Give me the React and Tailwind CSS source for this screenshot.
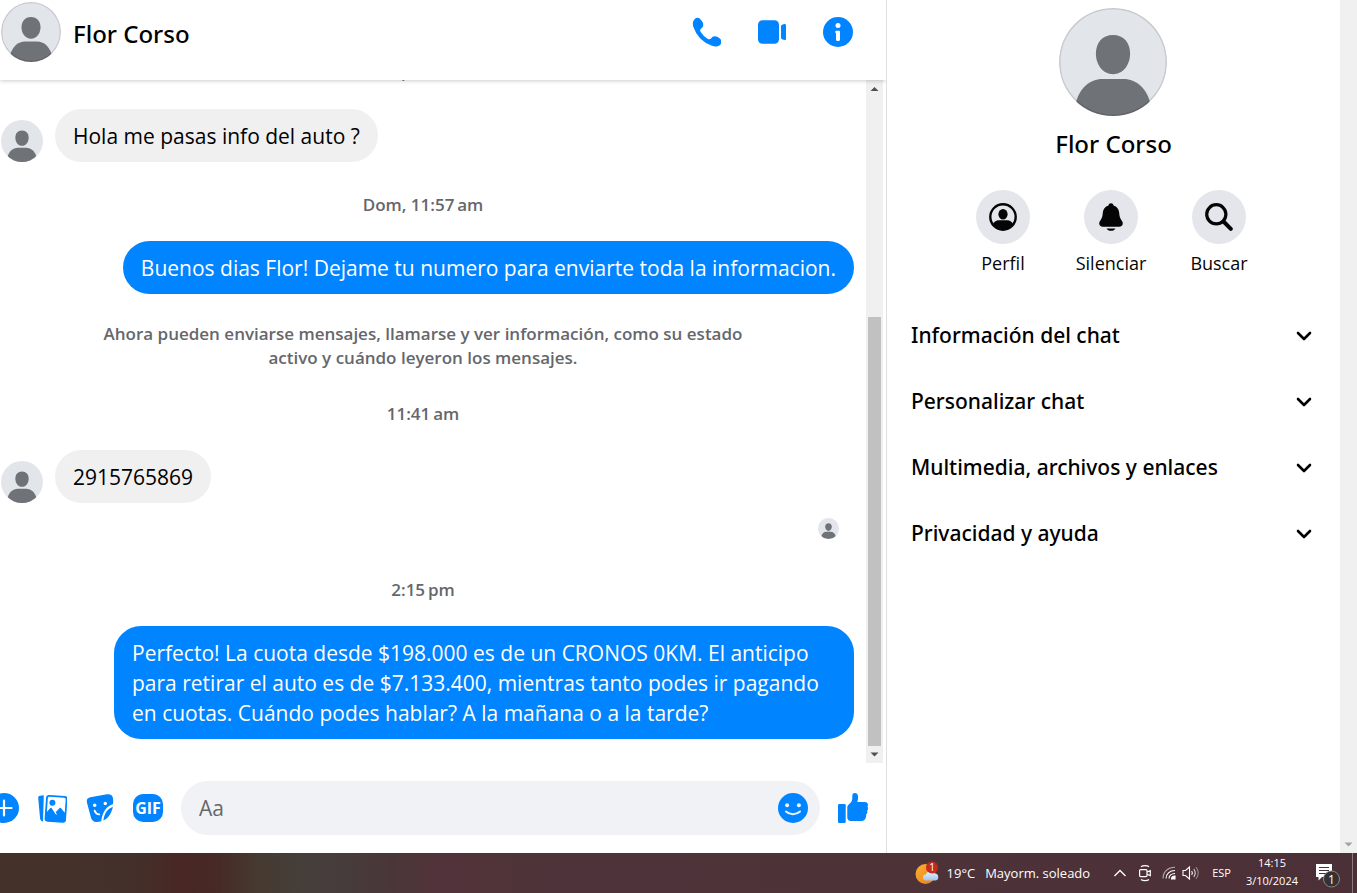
function Avatar({ className, ring = 0 }) {
  return (
    <svg viewBox="0 0 36 36" className={`shrink-0 rounded-full ${className}`} aria-hidden="true">
      <rect width="36" height="36" fill="#e2e5ea" />
      <path
        d="M18 9c3.600 0 5.700 2.600 5.700 6.200 0 3.800-2.400 6.900-5.700 6.900s-5.700-3.100-5.700-6.900C12.300 11.600 14.400 9 18 9z"
        fill="#6f7277"
      />
      <path
        d="M14.500 23.700h7c4.400 0 7.600 3.300 8.700 7.300V36H5.800v-5c1.100-4 4.300-7.300 8.700-7.300z"
        fill="#6f7277"
      />
      {ring > 0 && (
        <circle cx="18" cy="18" r={18 - ring / 2} fill="none" stroke="#000" strokeOpacity="0.12" strokeWidth={ring} />
      )}
    </svg>
  );
}

function PhoneIcon() {
  return (
    <svg viewBox="1 1 18 18" className="size-[30px]" fill="currentColor">
      <path
        d="M10.500 14.200c.6.400 1.300.4 1.900-.1.500-.4.700-.9 1.200-1.200.9-.5 2-.4 3 .2.700.4 1.200.9 1.700 1.400.8.900.8 2.200 0 3.100-1.300 1.300-3.100 1.500-5.100.8a17.500 17.500 0 01-6.900-4.200 17.500 17.500 0 01-4.200-6.900c-.7-2-.5-3.800.8-5 .9-.9 2.300-.9 3.200 0 .5.500 1 1.100 1.400 1.800.6 1 .6 2.100.1 3-.3.5-.8.700-1.200 1.200-.4.600-.4 1.200 0 1.800a14 14 0 004.100 4.100z"
        transform="translate(.4 -.1)"
      />
    </svg>
  );
}

function VideoIcon() {
  return (
    <svg viewBox="0 0 30 30" className="size-[30px]" fill="currentColor">
      <rect x="1" y="3.200" width="21" height="23.500" rx="4.500" />
      <path d="M24 9.500c0-1.200.8-1.700 1.900-2.100l1.200-.4c1.200-.3 1.900.3 1.900 1.500v13c0 1.200-.7 1.800-1.900 1.500l-1.200-.4c-1.100-.4-1.900-.9-1.900-2.100z" />
    </svg>
  );
}

function InfoIcon() {
  return (
    <svg viewBox="0 0 30 30" className="size-[30px]">
      <circle cx="15" cy="15" r="15" fill="currentColor" />
      <circle cx="15" cy="8.500" r="2.500" fill="#fff" />
      <path d="M13.600 13.800h2.200c.7 0 1.200.5 1.200 1.200v7.800c0 .7-.5 1.200-1.200 1.200h-1.600c-.7 0-1.200-.5-1.200-1.200v-6.600c-.6-.2-.8-.6-.8-1.200 0-.7.600-1.200 1.400-1.200z" fill="#fff" />
    </svg>
  );
}

function PlusIcon() {
  return (
    <svg viewBox="0 0 30 30" className="size-[30px]">
      <circle cx="15" cy="15" r="15" fill="currentColor" />
      <path d="M15 7.500v15M7.500 15h15" stroke="#fff" strokeWidth="2.200" strokeLinecap="round" />
    </svg>
  );
}

function PhotosIcon() {
  return (
    <svg viewBox="0 0 30 30" className="size-[30px]">
      <path d="M6.800 2.300L3 2.800C1.800 3 1.100 3.800 1.200 5l1.900 20.500c.2 1.600 1.200 2.700 2.900 3z" fill="currentColor" />
      <g transform="rotate(4 19 16)">
        <rect x="8.300" y="2.400" width="21.400" height="26.800" rx="3" fill="currentColor" />
        <path
          d="M11.600 4.200h14.800c.9 0 1.600.7 1.600 1.600v13.400l-4-4.400c-.5-.6-1.200-.5-1.700.1l-3.400 4.300 1.600 2.200c-1 .1-1.700-.3-2.300-1.100l-3.300-4.600c-.6-.8-1.300-.8-1.900 0l-2.900 4V5.800c0-.9.700-1.600 1.500-1.600z"
          fill="#fff"
        />
        <circle cx="15" cy="10" r="3" fill="currentColor" />
      </g>
    </svg>
  );
}

function StickerIcon() {
  return (
    <svg viewBox="0 0 30 30" className="size-[30px]">
      <path
        d="M5.300 4.300L22 1.300c3.300-.5 5.500 1 6 4 .3 2.200.3 4 .1 5.800-6.300 2.300-10.600 7.400-11.900 17.200-1.800.5-3.500.7-5 .6-2.600-.2-4.200-1.500-5.100-4L2 9.800c-.8-2.900.4-5 3.300-5.500z"
        fill="currentColor"
      />
      <path d="M27.900 13.700c-1.200 6-4.200 11.300-9.500 13.900.6-6.900 4-11.900 9.500-13.900z" fill="currentColor" />
      <circle cx="9.700" cy="12.300" r="1.700" fill="#fff" />
      <circle cx="20.300" cy="10.500" r="1.700" fill="#fff" />
      <path d="M9.700 17.700c.8 2.300 2.400 3.600 4.500 3.700" fill="none" stroke="#fff" strokeWidth="1.900" strokeLinecap="round" />
    </svg>
  );
}

function SmileIcon() {
  return (
    <svg viewBox="0 0 30 30" className="size-[30px]">
      <circle cx="15" cy="15" r="15" fill="currentColor" />
      <circle cx="9.100" cy="12.200" r="2" fill="#f0f2f5" />
      <circle cx="20.900" cy="12.200" r="2" fill="#f0f2f5" />
      <path d="M8 18.500c3.800 3.600 10.200 3.600 14 0" fill="none" stroke="#f0f2f5" strokeWidth="2" strokeLinecap="round" />
    </svg>
  );
}

function LikeIcon() {
  return (
    <svg viewBox="0 0 30 30" className="size-[30px]" fill="currentColor">
      <rect x="0" y="11" width="7.700" height="19" rx="1.200" />
      <path d="M9.300 14.500c0-1.500.6-2.500 1.700-3.300 2-1.500 3.300-3.200 3.300-5.900V2.400C14.300.9 15.300 0 16.700 0c2.300 0 3.400 1.600 3.400 4.200 0 1.700-.3 3.300-.8 4.800h7.300c2.100 0 3.400 1.200 3.400 2.700 0 .8-.2 1.400-.6 1.900.6.6.8 1.300.7 2.200-.1.900-.5 1.500-1 2 .3.600.4 1.300.2 2-.2.800-.6 1.400-1.200 1.800.2.700.2 1.400-.1 2.200-.5 3.100-2.300 4.200-4.500 4.200H13c-2.400 0-3.700-1.200-3.700-3.500z" />
    </svg>
  );
}

function ProfileIcon() {
  return (
    <svg viewBox="0 0 28 28" className="size-7">
      <circle cx="14" cy="14" r="12.700" fill="none" stroke="currentColor" strokeWidth="2.400" />
      <ellipse cx="14" cy="11.200" rx="4.600" ry="5.300" fill="currentColor" />
      <path d="M10 17.300h8c3 0 5.300 1.600 6.400 4.500a13 13 0 01-20.800 0c1.100-2.900 3.400-4.500 6.400-4.500z" fill="currentColor" />
    </svg>
  );
}

function BellIcon() {
  return (
    <svg viewBox="0 0 28 28" className="size-7" fill="currentColor">
      <path d="M14 .3c1.400 0 2.300.8 2.500 2.100 3.500 1 5.400 3.600 5.700 7.400.2 3.500.9 5.900 2.600 8 .7.900 1 1.600 1 2.500 0 2.200-1.400 3.500-3.800 3.500H6c-2.400 0-3.800-1.300-3.800-3.500 0-.9.300-1.600 1-2.500 1.700-2.100 2.400-4.500 2.600-8 .3-3.800 2.200-6.400 5.700-7.400C11.700 1.100 12.600.3 14 .3z" />
      <path d="M9.600 25.400h8.800c-.7 1.500-2.300 2.400-4.400 2.400s-3.700-.9-4.400-2.400z" />
    </svg>
  );
}

function SearchIcon() {
  return (
    <svg viewBox="0 0 28 28" className="size-7" fill="none" stroke="currentColor" strokeLinecap="round">
      <circle cx="11.300" cy="11.300" r="9.600" strokeWidth="3.200" />
      <path d="M18.500 18.500l7.300 7.300" strokeWidth="4" />
    </svg>
  );
}

function Chevron() {
  return (
    <svg viewBox="0 0 16 16" className="size-4" fill="none" stroke="currentColor" strokeWidth="2.600" strokeLinecap="round" strokeLinejoin="round">
      <path d="M2 5l6 6 6-6" />
    </svg>
  );
}

function ScrollArrow({ up = false, color = '#505050' }) {
  return (
    <svg viewBox="0 0 17 17" className="size-[17px] shrink-0" fill={color}>
      {up ? <path d="M8.500 7l4 4h-8z" /> : <path d="M8.500 10.500l4-4h-8z" />}
    </svg>
  );
}

function Incoming({ children }) {
  return (
    <div className="flex items-end gap-3 pl-px">
      <Avatar className="size-[42px]" />
      <p className="rounded-[27px] bg-[#f0f0f0] px-[18px] pt-3 pb-[11px] text-black">{children}</p>
    </div>
  );
}

function Outgoing({ children }) {
  return (
    <div className="flex justify-end">
      <p className="max-w-[740px] rounded-[27px] bg-[#0084ff] px-[18px] pt-3 pb-[11px] text-white">{children}</p>
    </div>
  );
}

function Timestamp({ children }) {
  return (
    <p className="pt-[31px] pr-2 pb-6 text-center text-[17px] leading-6 font-semibold text-[#65676b]">{children}</p>
  );
}

const sections = ['Información del chat', 'Personalizar chat', 'Multimedia, archivos y enlaces', 'Privacidad y ayuda'];

const shortcuts = [
  { label: 'Perfil', Icon: ProfileIcon },
  { label: 'Silenciar', Icon: BellIcon },
  { label: 'Buscar', Icon: SearchIcon },
];

function ChatHeader() {
  return (
    <header className="z-10 flex h-20 shrink-0 items-center pr-[33px] pb-4 pl-px shadow-[0_1px_4px_rgba(0,0,0,0.2)]">
      <Avatar className="size-[60px]" ring={0.8} />
      <h1 className="flex-1 pt-1 pl-3 font-['Noto_Sans','Open_Sans',sans-serif] text-[24px] leading-7 font-medium text-black">
        Flor Corso
      </h1>
      <div className="flex gap-9 text-[#0084ff]">
        <button type="button" aria-label="Llamar"><PhoneIcon /></button>
        <button type="button" aria-label="Videollamada"><VideoIcon /></button>
        <button type="button" aria-label="Información"><InfoIcon /></button>
      </div>
    </header>
  );
}

function Messages() {
  return (
    <div className="flex min-h-0 flex-1 pr-[3px]">
      <div className="flex min-w-0 flex-1 flex-col justify-end overflow-hidden pr-3 pb-6 text-[21px] leading-[30px]">
        <Timestamp>Dom, 11:55&#8201;am</Timestamp>
        <Incoming>Hola me pasas info del auto ?</Incoming>
        <Timestamp>Dom, 11:57&#8201;am</Timestamp>
        <Outgoing>Buenos dias Flor! Dejame tu numero para enviarte toda la informacion.</Outgoing>
        <div className="pt-7 pr-2 pb-px">
          <p className="mx-auto max-w-[660px] text-center text-[17px] leading-6 font-semibold text-[#65676b]">
            Ahora pueden enviarse mensajes, llamarse y ver información, como su estado activo y cuándo leyeron los mensajes.
          </p>
        </div>
        <Timestamp>11:41&#8201;am</Timestamp>
        <Incoming>2915765869</Incoming>
        <div className="flex justify-end pt-[15px] pr-[15px] pb-2">
          <Avatar className="size-[21px]" />
        </div>
        <Timestamp>2:15&#8201;pm</Timestamp>
        <Outgoing>
          Perfecto! La cuota desde $198.000 es de un CRONOS 0KM. El anticipo para retirar el auto es de $7.133.400,
          mientras tanto podes ir pagando en cuotas. Cuándo podes hablar? A la mañana o a la tarde?
        </Outgoing>
      </div>
      <div className="flex w-[17px] flex-col bg-[#f0f0f0]">
        <ScrollArrow up />
        <div className="grow-[220]" />
        <div className="mx-[2px] grow-[429] bg-[#c1c1c1]" />
        <ScrollArrow />
      </div>
    </div>
  );
}

function Composer() {
  return (
    <form className="-ml-[11px] flex h-[90px] shrink-0 items-center gap-[18px] pr-[18px] text-[#0084ff]">
      <button type="button" aria-label="Más acciones"><PlusIcon /></button>
      <button type="button" aria-label="Adjuntar foto"><PhotosIcon /></button>
      <button type="button" aria-label="Elegir sticker"><StickerIcon /></button>
      <button type="button" aria-label="Elegir GIF" className="flex size-[30px] items-center justify-center">
        <span className="flex h-7 w-[30px] items-center justify-center rounded-[10px] bg-[#0084ff] text-[16px] leading-none font-bold text-white">
          GIF
        </span>
      </button>
      <div className="flex h-[54px] min-w-0 flex-1 items-center rounded-full bg-[#f0f2f5] pr-3 pl-[18px]">
        <input
          type="text"
          aria-label="Mensaje"
          placeholder="Aa"
          className="min-w-0 flex-1 bg-transparent text-[21px] leading-[30px] text-black outline-none placeholder:text-[#65676b]"
        />
        <button type="button" aria-label="Elegir emoji"><SmileIcon /></button>
      </div>
      <button type="button" aria-label="Me gusta"><LikeIcon /></button>
    </form>
  );
}

function Details() {
  return (
    <aside className="flex w-[471px] shrink-0 border-l border-[#dddfe2]">
      <div className="flex min-w-0 flex-1 flex-col pt-2">
        <div className="flex justify-center pr-[2px]">
          <Avatar className="size-[108px]" ring={0.5} />
        </div>
        <h2 className="pt-[14px] text-center font-['Noto_Sans','Open_Sans',sans-serif] text-[24px] leading-7 font-medium text-black">
          Flor Corso
        </h2>
        <div className="flex justify-center pt-8 pr-[5px]">
          {shortcuts.map(({ label, Icon }) => (
            <button key={label} type="button" className="flex w-[108px] flex-col items-center text-[#050505]">
              <span className="flex size-[54px] items-center justify-center rounded-full bg-[#e4e6eb]">
                <Icon />
              </span>
              <span className="pt-[7px] text-[18px] leading-6">{label}</span>
            </button>
          ))}
        </div>
        <div className="pt-7 font-['Noto_Sans','Open_Sans',sans-serif]">
          {sections.map((title) => (
            <button
              key={title}
              type="button"
              className="flex h-[66px] w-full items-center justify-between pr-7 pl-6 text-[21px] font-medium text-black"
            >
              {title}
              <Chevron />
            </button>
          ))}
        </div>
      </div>
      <div className="flex w-[17px] flex-col justify-end bg-[#f0f0f0]">
        <ScrollArrow color="#a3a3a3" />
      </div>
    </aside>
  );
}

function WeatherIcon() {
  return (
    <svg viewBox="0 0 24 24" className="size-6">
      <defs>
        <linearGradient id="sun" x1="0" y1="0" x2="1" y2="1">
          <stop offset="0" stopColor="#f9b233" />
          <stop offset="1" stopColor="#ee7a1b" />
        </linearGradient>
        <linearGradient id="cloud" x1="0" y1="0" x2="0" y2="1">
          <stop offset="0" stopColor="#e8f1fc" />
          <stop offset="1" stopColor="#9fc3f1" />
        </linearGradient>
      </defs>
      <circle cx="10.500" cy="13" r="10" fill="url(#sun)" />
      <path d="M11 19.500a3 3 0 01-.2-6 4.500 4.500 0 018.300-.8 3.400 3.400 0 011.400 6.800z" fill="url(#cloud)" />
      <circle cx="17" cy="6.500" r="6" fill="#c42b1c" />
      <text x="17" y="10" textAnchor="middle" fontSize="10" fill="#fff">1</text>
    </svg>
  );
}

function Taskbar() {
  return (
    <footer className="flex h-10 shrink-0 items-center justify-end bg-[linear-gradient(90deg,#43322a_0%,#43302a_10%,#482724_13%,#472925_16%,#463a31_19%,#453f3c_23%,#4a3639_29%,#53323a_33%,#4e3439_38%,#4c3038_100%)] text-white">
      <button type="button" className="flex items-center text-[13px] leading-5">
        <WeatherIcon />
        <span className="pl-2">19°C</span>
        <span className="pl-[10px]">Mayorm. soleado</span>
      </button>
      <button type="button" aria-label="Mostrar iconos ocultos" className="ml-6">
        <svg viewBox="0 0 12 12" className="size-3" fill="none" stroke="currentColor" strokeWidth="1.300">
          <path d="M.5 9L6 3.500 11.500 9" />
        </svg>
      </button>
      <svg viewBox="0 0 14 18" className="ml-3 h-[18px] w-[14px]" fill="none" stroke="currentColor" strokeWidth="1.200">
        <rect x="1.600" y="5.600" width="7.400" height="7" rx="1" />
        <path d="M9 8l3.300-1.400v5L9 10.200M3 2.800C5 1.300 9 1.300 11 2.800M3 15.400c2 1.500 6 1.500 8 0" />
      </svg>
      <svg viewBox="0 0 14 14" className="ml-[10px] size-[14px]" fill="none" stroke="currentColor" strokeWidth="1.100">
        <path d="M1 12.500C1 6 6 1.300 13 1.300" opacity=".6" />
        <path d="M4 12.500c0-4.500 3.600-8 9-8M7 12.500c0-2.800 2.400-5 6-5" />
        <path d="M9.500 13c0-1.800 1.500-3 3.500-3v3z" fill="currentColor" />
      </svg>
      <svg viewBox="0 0 18 16" className="ml-[6px] h-4 w-[18px]" fill="none" stroke="currentColor" strokeWidth="1.100">
        <path d="M1 5.500h2.500L7.500 2v12l-4-3.500H1z" />
        <path d="M9.700 6c.8 1.200.8 2.800 0 4" />
        <path d="M11.800 4c1.700 2.400 1.700 5.600 0 8" opacity=".8" />
        <path d="M14 2.200c2.700 3.500 2.700 8.100 0 11.600" opacity=".4" />
      </svg>
      <span className="ml-3 text-[11px] leading-[18px]">ESP</span>
      <time className="ml-[15px] pb-[3px] text-center text-[11px] leading-[18px]">
        14:15
        <br />
        3/10/2024
      </time>
      <button type="button" aria-label="Notificaciones" className="ml-[17px] pt-1">
        <svg viewBox="0 0 26 26" className="size-[26px]">
          <path d="M1 2h16v13H7l-3.500 3.500V15H1z" fill="#fff" />
          <path d="M4 5.500h10M4 8.500h10M4 11.500h7" stroke="#4c3038" strokeWidth="1.200" />
          <circle cx="16.500" cy="17" r="8" fill="#333132" stroke="#8d8587" />
          <text x="16.500" y="21.500" textAnchor="middle" fontSize="12" fill="#fff">1</text>
        </svg>
      </button>
      <div className="ml-[11px] h-full w-[5px] border-l border-[#8b7a80]" />
    </footer>
  );
}

export default function App() {
  return (
    <div className="flex h-screen flex-col bg-white font-['Open_Sans','Noto_Sans',sans-serif]">
      <div className="flex min-h-0 flex-1">
        <main className="flex min-w-0 flex-1 flex-col overflow-hidden">
          <ChatHeader />
          <Messages />
          <Composer />
        </main>
        <Details />
      </div>
      <Taskbar />
    </div>
  );
}
